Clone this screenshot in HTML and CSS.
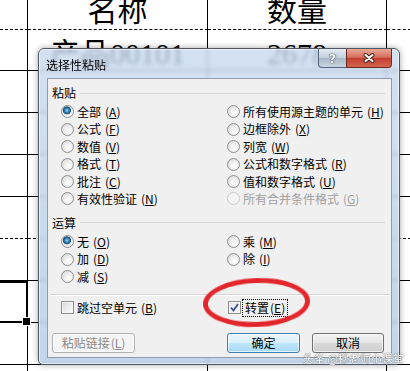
FILE: index.html
```html
<!DOCTYPE html>
<html lang="zh-CN">
<head>
    <meta charset="UTF-8">
    <title>选择性粘贴</title>
    <link rel="stylesheet" href="styles.css">
</head>
<body>

<div class="sheet">
    <div class="cell dash"></div>
    <div class="cell dash head">名称</div>
    <div class="cell dash head">数量</div>
    <div class="cell dash"></div>

    <div class="cell"></div>
    <div class="cell item">产品00101</div>
    <div class="cell item">2678</div>
    <div class="cell"></div>

    <div class="cell"></div><div class="cell"></div><div class="cell"></div><div class="cell"></div>
    <div class="cell"></div><div class="cell"></div><div class="cell"></div><div class="cell"></div>
    <div class="cell"></div><div class="cell"></div><div class="cell"></div><div class="cell"></div>
    <div class="cell dash"></div><div class="cell dash"></div><div class="cell dash"></div><div class="cell dash"></div>
    <div class="cell"></div><div class="cell"></div><div class="cell"></div><div class="cell"></div>
    <div class="cell sel"></div><div class="cell"></div><div class="cell"></div><div class="cell"></div>
    <div class="cell"></div><div class="cell"></div><div class="cell"></div><div class="cell"></div>
    <div class="cell"></div><div class="cell"></div><div class="cell"></div><div class="cell"></div>
</div>

<div class="dialog">
    <div class="titlebar">
        <span class="title">选择性粘贴</span>
        <div class="caption-btns">
            <span class="cap help">?</span>
            <span class="cap close">
                <svg width="12" height="10" viewBox="0 0 12 10">
                    <path d="M2.5 2 L9.5 8 M9.5 2 L2.5 8" stroke="#4a1c16" stroke-width="4" stroke-linecap="round"/>
                    <path d="M2.5 2 L9.5 8 M9.5 2 L2.5 8" stroke="#ffffff" stroke-width="2.2" stroke-linecap="round"/>
                </svg>
            </span>
        </div>
    </div>

    <div class="client">
        <div class="group-label first"><span>粘贴</span></div>
        <div class="options">
            <div class="opt"><span class="radio on"></span>全部<span class="key">(<u>A</u>)</span></div>
            <div class="opt"><span class="radio"></span>所有使用源主题的单元<span class="key">(<u>H</u>)</span></div>
            <div class="opt"><span class="radio"></span>公式<span class="key">(<u>F</u>)</span></div>
            <div class="opt"><span class="radio"></span>边框除外<span class="key">(<u>X</u>)</span></div>
            <div class="opt"><span class="radio"></span>数值<span class="key">(<u>V</u>)</span></div>
            <div class="opt"><span class="radio"></span>列宽<span class="key">(<u>W</u>)</span></div>
            <div class="opt"><span class="radio"></span>格式<span class="key">(<u>T</u>)</span></div>
            <div class="opt"><span class="radio"></span>公式和数字格式<span class="key">(<u>R</u>)</span></div>
            <div class="opt"><span class="radio"></span>批注<span class="key">(<u>C</u>)</span></div>
            <div class="opt"><span class="radio"></span>值和数字格式<span class="key">(<u>U</u>)</span></div>
            <div class="opt"><span class="radio"></span>有效性验证<span class="key">(<u>N</u>)</span></div>
            <div class="opt disabled"><span class="radio"></span>所有合并条件格式<span class="key">(<u>G</u>)</span></div>
        </div>

        <div class="group-label"><span>运算</span></div>
        <div class="options">
            <div class="opt"><span class="radio on"></span>无<span class="key">(<u>O</u>)</span></div>
            <div class="opt"><span class="radio"></span>乘<span class="key">(<u>M</u>)</span></div>
            <div class="opt"><span class="radio"></span>加<span class="key">(<u>D</u>)</span></div>
            <div class="opt"><span class="radio"></span>除<span class="key">(<u>I</u>)</span></div>
            <div class="opt"><span class="radio"></span>减<span class="key">(<u>S</u>)</span></div>
        </div>

        <div class="sep"></div>

        <div class="options checks">
            <div class="opt"><span class="check"></span>跳过空单元<span class="key">(<u>B</u>)</span></div>
            <div class="opt">
                <span class="check on">
                    <svg width="11" height="11" viewBox="0 0 11 11">
                        <path d="M2 5.5 L4.5 8.5 L9 2" fill="none" stroke="#3c4f8c" stroke-width="1.8"/>
                    </svg>
                </span>
                <span class="focus">转置<span class="key">(<u>E</u>)</span></span>
            </div>
        </div>

        <div class="buttons">
            <span class="btn disabled">粘贴链接<span class="key">(<u>L</u>)</span></span>
            <span class="btn primary">确定</span>
            <span class="btn">取消</span>
        </div>
    </div>
</div>

<div class="mark"></div>
<div class="watermark">头条 @穆老师小课堂</div>

</body>
</html>
```

FILE: styles.css
```css
* {
    box-sizing: border-box;
}

body {
    margin: 0;
    width: 410px;
    height: 371px;
    overflow: hidden;
    position: relative;
    background: #ffffff;
    font-family: "Noto Sans CJK SC", sans-serif;
}

/* spreadsheet behind the dialog */

.sheet {
    height: 371px;
    overflow: hidden;
    display: grid;
    grid-template-columns: 28px 180px 179px 40px;
    grid-template-rows: 30px 41px;
    grid-auto-rows: 42px;
}

.cell {
    border-right: 1px solid #000;
    border-bottom: 1px solid #000;
    font-family: "Liberation Serif", "Noto Sans CJK SC", serif;
    font-size: 30px;
    text-align: center;
    color: #000;
    white-space: nowrap;
}

.cell.dash {
    border-bottom-style: dashed;
}

.cell.head {
    line-height: 18px;
    padding-top: 2px;
}

.cell.item {
    line-height: 30px;
    padding-top: 9px;
}

.cell.sel {
    position: relative;
    border-top: 2px solid #000;
    border-right: 2px solid #000;
    border-bottom: 2px solid #000;
}

.cell.sel::after {
    content: "";
    position: absolute;
    right: -5px;
    bottom: -5px;
    width: 7px;
    height: 7px;
    background: #000;
    border: 1px solid #fff;
}

/* dialog */

.dialog {
    position: absolute;
    left: 38px;
    top: 48px;
    width: 362px;
    height: 317px;
    display: flex;
    flex-direction: column;
    padding: 0 7px 6px 8px;
    border: 1px solid #4e5864;
    border-radius: 6px 6px 5px 5px;
    background: linear-gradient(rgba(200, 217, 238, 0.8), rgba(182, 204, 230, 0.82));
    backdrop-filter: blur(2px);
    box-shadow: inset 0 0 0 1px rgba(255, 255, 255, 0.6), 0 0 6px rgba(0, 0, 0, 0.35);
}

.titlebar {
    height: 29px;
    display: flex;
    justify-content: space-between;
    align-items: flex-start;
}

.title {
    margin: 9px 0 0 -1px;
    font-size: 12px;
    line-height: 14px;
    color: #000;
}

.caption-btns {
    display: flex;
}

.cap {
    height: 19px;
    display: flex;
    align-items: center;
    justify-content: center;
    border: 1px solid #56667a;
    border-top: none;
}

.cap.help {
    width: 28px;
    border-right: none;
    border-radius: 0 0 0 4px;
    background: linear-gradient(#e3eaf2, #c3cfdc 48%, #a9b8c9 52%, #c8d4e0);
    font-family: "DejaVu Sans", sans-serif;
    font-weight: bold;
    font-size: 13px;
    color: #fff;
    text-shadow: 0 0 1px #34475c, 0 0 1px #34475c, 0 0 1px #34475c;
}

.cap.close {
    width: 46px;
    border-color: #6b2a22;
    border-radius: 0 0 4px 0;
    background: linear-gradient(#eba897, #d6705f 45%, #c4402f 52%, #d4644f);
}

.client {
    flex: 1;
    padding: 0 6px 0 4px;
    background: #f0f0f0;
    border: 1px solid #8c9db1;
    font-size: 12px;
    color: #000;
}

.group-label {
    display: flex;
    align-items: center;
    height: 14px;
    line-height: 14px;
    margin-top: 8.3px;
}

.group-label.first {
    margin-top: 7px;
}

.group-label::after {
    content: "";
    flex: 1;
    margin-left: 4px;
    border-top: 1px solid #d5d5d5;
}

.options {
    display: grid;
    grid-template-columns: 166px 1fr;
    grid-auto-rows: 17.4px;
    margin-top: 3.3px;
    padding-left: 9px;
}

.opt {
    display: flex;
    align-items: center;
    gap: 3px;
    line-height: 14px;
    white-space: nowrap;
}

.key {
    margin-left: 1px;
}

.opt.disabled {
    color: #a0a0a0;
}

.radio {
    flex: none;
    width: 13px;
    height: 13px;
    border-radius: 50%;
    border: 1px solid #8e8f8f;
    background: radial-gradient(circle at 60% 65%, #ffffff 0, #f2f2f2 35%, #d2d2d2 100%);
}

.radio.on {
    background: radial-gradient(circle at 45% 40%, #a5dbf5 0, #3b8cc0 20%, #1c4f78 42%, #eaeaea 48%, #f6f6f6 70%, #d4d4d4 100%);
}

.opt.disabled .radio {
    border-color: #cacaca;
    background: #f4f4f4;
}

.sep {
    margin: 8.5px -5px 0 -2px;
    height: 2px;
    border-top: 1px solid #d5d5d5;
    border-bottom: 1px solid #fff;
}

.checks {
    grid-template-columns: 167px 1fr;
}

.check {
    flex: none;
    width: 13px;
    height: 13px;
    display: flex;
    align-items: center;
    justify-content: center;
    border: 1px solid #8e8f8f;
    background: linear-gradient(135deg, #d6d6d6, #ffffff);
    box-shadow: inset 0 0 0 1px #f4f4f4;
}

.check.on {
    background: linear-gradient(135deg, #dfe3ea, #ffffff);
}

.focus {
    padding: 1px 2px;
    margin-left: -2px;
    border: 1px dotted #000;
}

.buttons {
    display: flex;
    margin-top: 16.3px;
    margin-right: 1px;
}

.btn {
    height: 20px;
    display: flex;
    align-items: center;
    justify-content: center;
    border: 1px solid #707070;
    border-radius: 3px;
    background: linear-gradient(#f2f2f2, #e6e6e6 48%, #d8d8d8 52%, #cfcfcf);
    box-shadow: inset 0 0 0 1px rgba(255, 255, 255, 0.7);
    line-height: 14px;
}

.btn.disabled {
    width: 83px;
    color: #8a8a8a;
    border-color: #adb2b5;
    background: #f4f4f4;
}

.btn.primary {
    width: 73px;
    margin-left: auto;
    border-color: #3c7fb1;
    background: linear-gradient(#eaf6fd, #d9f0fc 48%, #bee6fd 52%, #a7d9f5);
}

.btn.primary + .btn {
    width: 72px;
    margin-left: 12px;
}

/* red ring drawn over the screenshot */

.mark {
    position: absolute;
    left: 203px;
    top: 278px;
    width: 107px;
    height: 49px;
    border: 5px solid #e3262c;
    border-radius: 50%;
    transform: rotate(-2deg);
}

.watermark {
    position: absolute;
    left: 303px;
    top: 352px;
    font-size: 11px;
    line-height: 12px;
    color: #ffffff;
    text-shadow: 0 0 1px #666, 0 0 1px #666;
    white-space: nowrap;
}
```
